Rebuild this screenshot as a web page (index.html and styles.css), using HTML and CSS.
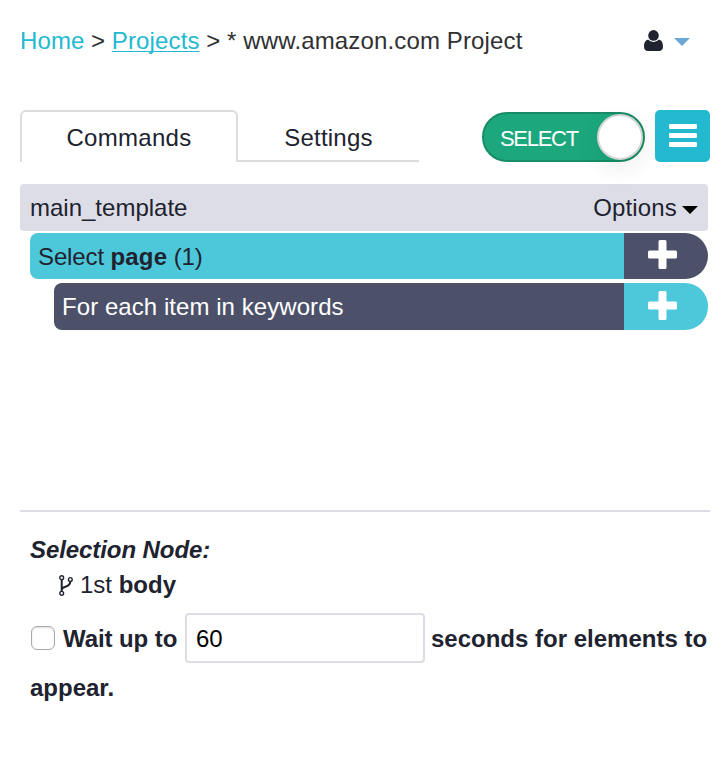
FILE: index.html
```html
<!DOCTYPE html>
<html lang="en">
<head>
<meta charset="utf-8">
<title>www.amazon.com Project</title>
<link rel="stylesheet" href="styles.css">
</head>
<body>
<header class="topbar">
  <nav class="crumbs"><a class="home" href="#">Home</a> &gt; <a class="current" href="#">Projects</a> &gt; <span class="project">* www.amazon.com Project</span></nav>
  <div class="account">
    <svg class="user" viewBox="0 0 19 21"><path d="M4.500 9.800C1.500 9.800 0 12.500 0 16.800C0 19.500 1.500 21 4 21H15C17.500 21 19 19.500 19 16.800C19 12.500 17.500 9.800 14.500 9.800C13 11.300 11.500 11.900 9.500 11.900C7.500 11.900 6 11.300 4.500 9.800Z"/><circle cx="9.500" cy="5.400" r="5.300"/></svg>
    <svg class="caret caret-blue" viewBox="0 0 16 8"><path d="M0 0H16L8 8Z"/></svg>
  </div>
</header>
<div class="toolbar">
  <div class="tabs">
    <div class="tab active">Commands</div>
    <div class="tab">Settings</div>
  </div>
  <div class="toggle"><span class="toggle-label">SELECT</span><span class="knob"></span></div>
  <button class="menu" aria-label="Menu"><svg viewBox="0 0 28 24"><rect width="28" height="5" rx="1.300"/><rect y="9" width="28" height="5" rx="1.300"/><rect y="18" width="28" height="5" rx="1.300"/></svg></button>
</div>
<main class="commands">
  <div class="template"><span class="name">main_template</span><span class="options">Options<svg class="caret" viewBox="0 0 16 8"><path d="M0 0H16L8 8Z"/></svg></span></div>
  <div class="command select">
    <div class="label"><span class="t-select">Select <b>page</b> (1)</span></div>
    <div class="add"><svg viewBox="0 0 29 29"><path d="M12 0H17Q18.500 0 18.500 1.500V10.500H27.500Q29 10.500 29 12V17Q29 18.500 27.500 18.500H18.500V27.500Q18.500 29 17 29H12Q10.500 29 10.500 27.500V18.500H1.500Q0 18.500 0 17V12Q0 10.500 1.500 10.500H10.500V1.500Q10.500 0 12 0Z"/></svg></div>
  </div>
  <div class="command loop">
    <div class="label"><span class="t-loop">For each item in keywords</span></div>
    <div class="add"><svg viewBox="0 0 29 29"><path d="M12 0H17Q18.500 0 18.500 1.500V10.500H27.500Q29 10.500 29 12V17Q29 18.500 27.500 18.500H18.500V27.500Q18.500 29 17 29H12Q10.500 29 10.500 27.500V18.500H1.500Q0 18.500 0 17V12Q0 10.500 1.500 10.500H10.500V1.500Q10.500 0 12 0Z"/></svg></div>
  </div>
</main>
<section class="details">
  <h2>Selection Node:</h2>
  <div class="node"><svg class="fork" viewBox="0 0 14 21"><g fill="none" stroke="currentColor"><circle cx="2.700" cy="2.700" r="1.900" stroke-width="1.400"/><circle cx="2.700" cy="18.300" r="1.900" stroke-width="1.400"/><circle cx="11.300" cy="4.500" r="1.900" stroke-width="1.400"/><path d="M2.700 4.600V16.400M11.300 6.400C11.300 13 2.700 10.500 2.700 15" stroke-width="2"/></g></svg><span>1st <b>body</b></span></div>
  <div class="wait"><span class="check" role="checkbox" aria-checked="false"></span><span class="t-wait">Wait up to</span><input type="text" value="60"><span class="t-seconds">seconds for elements to</span></div>
  <div class="wait-end">appear.</div>
</section>
</body>
</html>
```
FILE: styles.css
```css
* { box-sizing: border-box; }
body {
  margin: 0;
  background: #fff;
  color: #20232f;
  font: 24px/28px "Liberation Sans", Arial, sans-serif;
  white-space: nowrap;
}
svg { display: block; flex: none; fill: currentColor; }
.topbar {
  display: flex;
  justify-content: space-between;
  padding: 27px 36px 0 20px;
  height: 110px;
}
.crumbs { color: #303033; }
.crumbs a { color: #22b9d1; text-decoration: none; }
.crumbs .home { letter-spacing: .1px; }
.crumbs .current {
  letter-spacing: .15px;
  text-decoration: underline 1px;
  text-decoration-skip-ink: none;
  text-underline-offset: 2px;
}
.project { letter-spacing: .14px; }
.account { display: flex; gap: 11px; padding-top: 3px; }
.user { width: 19px; height: 21px; }
.caret { width: 16px; height: 8px; }
.caret-blue { color: #6ba8d8; margin-top: 8px; }
.toolbar { display: flex; align-items: flex-start; padding-left: 20px; height: 74px; }
.tabs { display: flex; width: 399px; margin-right: 63px; }
.tab {
  width: 181px;
  height: 52px;
  text-align: center;
  line-height: 55px;
  letter-spacing: .2px;
  border-bottom: 2px solid #dcdcdc;
}
.tab.active {
  width: 218px;
  line-height: 51px;
  letter-spacing: .3px;
  border: 2px solid #dcdcdc;
  border-bottom: 0;
  border-radius: 6px 6px 0 0;
}
.toggle {
  display: flex;
  justify-content: space-between;
  align-items: center;
  width: 163px;
  height: 50px;
  margin: 2px 10px 0 0;
  padding: 0 0 0 16px;
  border: 2px solid #178c66;
  border-radius: 25px;
  background: #1ca77d;
  color: #fff;
}
.toggle-label { font-size: 22px; letter-spacing: -1.3px; padding-top: 3px; }
.knob {
  width: 46px;
  height: 46px;
  border: 2px solid #d5d5d5;
  border-radius: 50%;
  background: #fff;
  box-shadow: 0 8px 24px rgba(0, 0, 0, .08);
}
.menu {
  display: flex;
  justify-content: center;
  width: 55px;
  height: 52px;
  padding: 14px 0 0;
  border: 0;
  border-radius: 5px;
  background: #22b9d1;
  color: #fff;
}
.menu svg { width: 28px; height: 24px; }
.commands { padding: 0 18px 0 20px; height: 326px; }
.template {
  display: flex;
  justify-content: space-between;
  align-items: center;
  height: 47px;
  margin-bottom: 2px;
  padding: 0 10px;
  border-radius: 4px;
  background: #dddde7;
}
.options { display: flex; align-items: center; gap: 5px; letter-spacing: .15px; }
.options .caret { color: #000; margin-top: 4px; }
.command { display: flex; height: 46px; }
.label {
  flex: 1;
  display: flex;
  align-items: center;
  padding: 1px 0 0 8px;
  border-radius: 8px 0 0 8px;
}
.add { width: 84px; padding: 7px 0 0 24px; border-radius: 0 23px 23px 0; }
.add svg { width: 29px; height: 29px; color: #fff; }
.select { margin: 0 0 4px 10px; }
.t-select { letter-spacing: -.12px; }
.t-select b { letter-spacing: .15px; }
.t-loop { letter-spacing: .06px; }
.loop { margin-left: 34px; height: 47px; }
.loop .add { padding-top: 8px; }
.select .label, .loop .add { background: #4dc7da; }
.loop .label, .select .add { background: #4c5169; }
.loop .label { color: #fff; }
.details {
  margin: 0 16px 0 20px;
  padding: 24px 0 0 10px;
  border-top: 2px solid #dddde7;
}
h2 {
  margin: 0;
  font: italic bold 24px/28px "Liberation Sans", Arial, sans-serif;
  letter-spacing: -.08px;
}
.node { display: flex; align-items: center; gap: 7px; padding: 7px 0 14px 29px; }
.fork { width: 14px; height: 21px; }
.wait, .wait-end { font-weight: bold; }
.wait { display: flex; align-items: center; height: 50px; margin-bottom: 11px; }
.check {
  width: 24px;
  height: 24px;
  margin: 0 8px 0 1px;
  border: 1px solid #a9a9a9;
  border-radius: 6px;
  background: #fff;
  box-shadow: inset 0 1px 2px #ddd;
}
.wait input {
  width: 240px;
  height: 50px;
  margin: 0 6px 0 auto;
  padding: 2px 9px 0;
  border: 2px solid #dddde7;
  border-radius: 4px;
  font: 24px "Liberation Sans", Arial, sans-serif;
  color: #000;
}
.t-wait { width: 116px; padding-top: 2px; letter-spacing: -.08px; }
.t-seconds { width: 279px; padding-top: 2px; }
```
